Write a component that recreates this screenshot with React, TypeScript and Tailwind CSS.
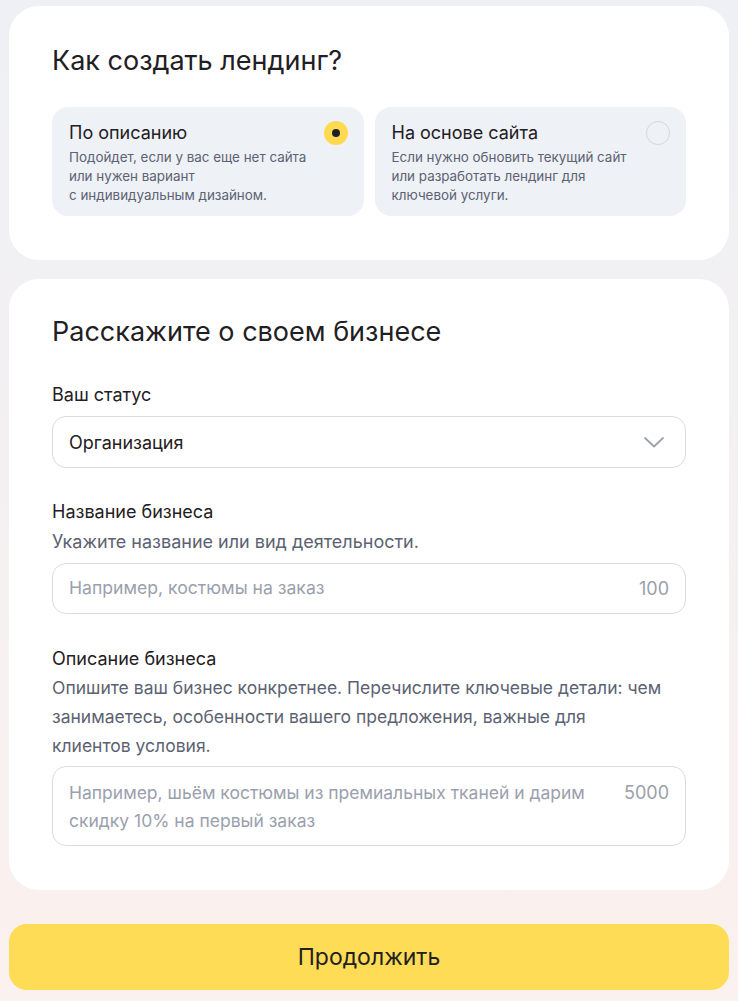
const font = { fontFamily: 'Inter, "Noto Sans", sans-serif' }

function Option({ title, text, active }: { title: string; text: string[]; active?: boolean }) {
  return (
    <div className="flex-1 rounded-[16px] bg-[#eef1f6] pl-[17px] pr-[16px] pt-[13px] pb-[11px]">
      <div className="flex items-start justify-between">
        <div className="text-[18px] leading-[26px] text-[#1f2023]">{title}</div>
        <div
          className={
            active
              ? 'mt-[1px] flex h-[24px] w-[24px] items-center justify-center rounded-full bg-[#ffd94f]'
              : 'mt-[1px] h-[24px] w-[24px] rounded-full border border-[#d3d7df]'
          }
        >
          {active && <div className="h-[8px] w-[8px] rounded-full bg-[#1f2023]" />}
        </div>
      </div>
      <div className="mt-[2px] text-[13.4px] leading-[19px] text-[#5c6271]">
        {text.map((t) => (
          <div key={t}>{t}</div>
        ))}
      </div>
    </div>
  )
}

export default function App() {
  return (
    <div
      style={font}
      className="min-h-[1001px] w-full bg-gradient-to-b from-[#eef0f5] to-[#fbf1ee] px-[9px] pt-[6px] pb-[11px]"
    >
      <div className="rounded-[30px] bg-white px-[43px] pt-[38px] pb-[44px]">
        <h1 className="text-[27px] leading-[34px] text-[#1f2023]">Как создать лендинг?</h1>
        <div className="mt-[29px] flex gap-[11px]">
          <Option
            active
            title="По описанию"
            text={['Подойдет, если у вас еще нет сайта', 'или нужен вариант', 'с индивидуальным дизайном.']}
          />
          <Option
            title="На основе сайта"
            text={['Если нужно обновить текущий сайт', 'или разработать лендинг для', 'ключевой услуги.']}
          />
        </div>
      </div>

      <div className="mt-[19px] rounded-[30px] bg-white px-[43px] pt-[36px] pb-[44px]">
        <h2 className="text-[27px] leading-[34px] text-[#1f2023]">Расскажите о своем бизнесе</h2>

        <div className="mt-[34px] text-[18px] leading-[24px] text-[#1f2023]">Ваш статус</div>
        <div className="mt-[9px] flex h-[52px] items-center justify-between rounded-[14px] border border-[#d9dce5] pl-[16px] pr-[21px]">
          <span className="text-[18px] text-[#1f2023]">Организация</span>
          <svg width="20" height="11" viewBox="0 0 20 11" fill="none">
            <path d="M1 1L10 9.5L19 1" stroke="#9aa0ad" strokeWidth="1.8" strokeLinecap="round" strokeLinejoin="round" />
          </svg>
        </div>

        <div className="mt-[32px] text-[18px] leading-[24px] text-[#1f2023]">Название бизнеса</div>
        <div className="mt-[6px] text-[18px] leading-[24px] text-[#5c6271]">Укажите название или вид деятельности.</div>
        <div className="mt-[9px] flex h-[51px] items-center justify-between rounded-[14px] border border-[#d9dce5] px-[16px]">
          <span className="text-[17.6px] text-[#9aa0ad]">Например, костюмы на заказ</span>
          <span className="text-[18px] text-[#9aa0ad]">100</span>
        </div>

        <div className="mt-[33px] text-[18px] leading-[24px] text-[#1f2023]">Описание бизнеса</div>
        <div className="mt-[2px] text-[17.5px] leading-[29px] text-[#5c6271]">
          Опишите ваш бизнес конкретнее. Перечислите ключевые детали: чем
          <br />
          занимаетесь, особенности вашего предложения, важные для
          <br />
          клиентов условия.
        </div>
        <div className="mt-[6px] flex h-[80px] items-start justify-between gap-[20px] rounded-[14px] border border-[#d9dce5] px-[16px] pt-[12px]">
          <span className="text-[17.5px] leading-[28px] text-[#9aa0ad]">
            Например, шьём костюмы из премиальных тканей и дарим скидку 10% на первый заказ
          </span>
          <span className="text-[18px] leading-[28px] text-[#9aa0ad]">5000</span>
        </div>
      </div>

      <button className="mt-[34px] flex h-[66px] w-full items-center justify-center rounded-[18px] bg-[#ffdc55] text-[23px] text-[#1f2023]">
        Продолжить
      </button>
    </div>
  )
}
